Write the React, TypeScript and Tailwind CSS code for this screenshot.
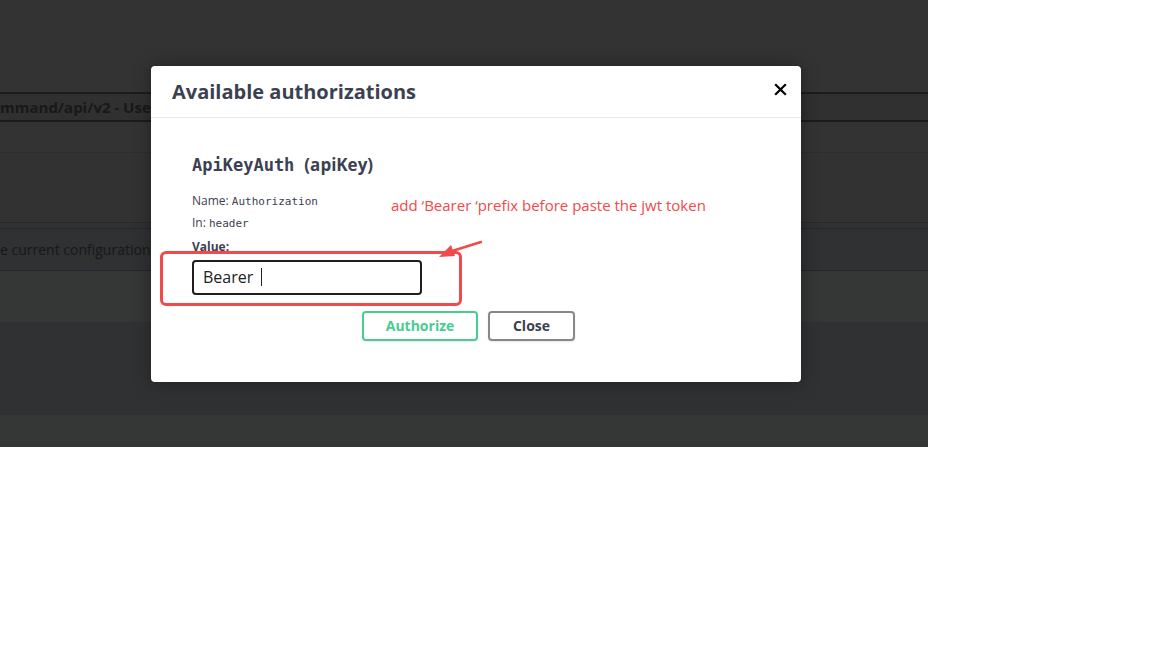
import React from "react"

const sans = "font-['Open_Sans','Noto_Sans',sans-serif]"
const mono = "font-['DejaVu_Sans_Mono','Liberation_Mono',monospace]"

function Backdrop() {
  return (
    <div className="flex h-full flex-col">
      <div className="h-[92px] shrink-0 bg-[#333333]" />
      <div className="flex h-[30px] shrink-0 items-center border-y-2 border-[#1b1b1b] bg-[#303030]">
        <span className={`${sans} whitespace-nowrap text-[15px] font-bold text-[#181818]`}>
          mmand/api/v2 - Use
        </span>
      </div>
      <div className="h-[30px] shrink-0 bg-[#333333]" />
      <div className="h-[70px] shrink-0 border-t border-[#2e2e2e] bg-[#323232]" />
      <div className="h-[6px] shrink-0 border-t border-[#282828] bg-[#313131]" />
      <div className="flex h-[43px] shrink-0 items-center border-y border-[#1f2733] bg-[#2f3132]">
        <span className={`${sans} whitespace-nowrap text-[14px] text-[#181818]`}>
          e current configuration c
        </span>
      </div>
      <div className="h-[51px] shrink-0 bg-[#353736]" />
      <div className="h-[93px] shrink-0 bg-[#303132]" />
      <div className="flex-1 bg-[#353736]" />
    </div>
  )
}

function Modal() {
  return (
    <div className="absolute left-[151px] top-[66px] h-[316px] w-[650px] rounded-[4px] bg-white shadow-[0_0_18px_rgba(0,0,0,0.35)]">
      <div className="flex h-[52px] items-center justify-between border-b border-[#e8e8e8] pl-[21px] pr-[14px]">
        <h3 className={`${sans} mt-[1px] text-[20px] font-bold text-[#3b4151]`}>Available authorizations</h3>
        <svg width="13" height="13" viewBox="0 0 20 20" className="mt-[-4px]">
          <path d="M3 3 L17 17 M17 3 L3 17" stroke="#000" strokeWidth="3.4" strokeLinecap="square" />
        </svg>
      </div>
      <div className="relative px-[41px] pt-[34px]">
        <h4 className="flex items-baseline text-[17px] font-bold text-[#3b4151]">
          <span className={mono}>ApiKeyAuth</span>
          <span className={`${sans} ml-[10px]`}>(apiKey)</span>
        </h4>
        <div className="mt-[11px] text-[12px] leading-[21px] text-[#3b4151]">
          <div>
            <span className={sans}>Name: </span>
            <span className={`${mono} text-[11px]`}>Authorization</span>
          </div>
          <div>
            <span className={sans}>In: </span>
            <span className={`${mono} text-[11px]`}>header</span>
          </div>
        </div>
        <div className={`${sans} mt-[4px] text-[12px] font-bold text-[#3b4151]`}>Value:</div>
        <div className="relative ml-[-32px] mt-[-5px] w-[302px] rounded-[6px] border-[3px] border-[#f04a4a] pb-[8px] pl-[29px] pt-[6px]">
          <div className="flex h-[35px] w-[230px] items-center rounded-[4px] border-2 border-[#1f1f1f] pl-[9px]">
            <span className={`${sans} text-[16px] text-[#222]`}>Bearer</span>
            <span className="ml-[8px] h-[18px] w-px bg-[#222]" />
          </div>
        </div>
        <div className="mt-[5px] flex justify-center gap-[10px] pr-[15px]">
          <button className={`${sans} h-[30px] w-[116px] rounded-[4px] border-2 border-[#49cc90] text-[14px] font-bold text-[#49cc90] shadow-[0_1px_2px_rgba(0,0,0,0.1)]`}>
            Authorize
          </button>
          <button className={`${sans} h-[30px] w-[87px] rounded-[4px] border-2 border-[#888] text-[14px] font-bold text-[#3b4151] shadow-[0_1px_2px_rgba(0,0,0,0.1)]`}>
            Close
          </button>
        </div>
        <span className={`${sans} absolute left-[240px] top-[76px] whitespace-nowrap text-[15px] text-[#f04a4a]`}>
          add ‘Bearer ‘prefix before paste the jwt token
        </span>
        <svg className="absolute left-[284px] top-[118px]" width="50" height="24" viewBox="0 0 50 24">
          <path d="M46 6 L14 16" stroke="#f04a4a" strokeWidth="2.5" strokeLinecap="round" />
          <path d="M4 21 L16 9 L20 20 Z" fill="#f04a4a" />
        </svg>
      </div>
    </div>
  )
}

export default function App() {
  return (
    <div className="h-[648px] w-[1152px] bg-white">
      <div className="relative h-[447px] w-[928px] overflow-hidden">
        <Backdrop />
        <Modal />
      </div>
    </div>
  )
}
